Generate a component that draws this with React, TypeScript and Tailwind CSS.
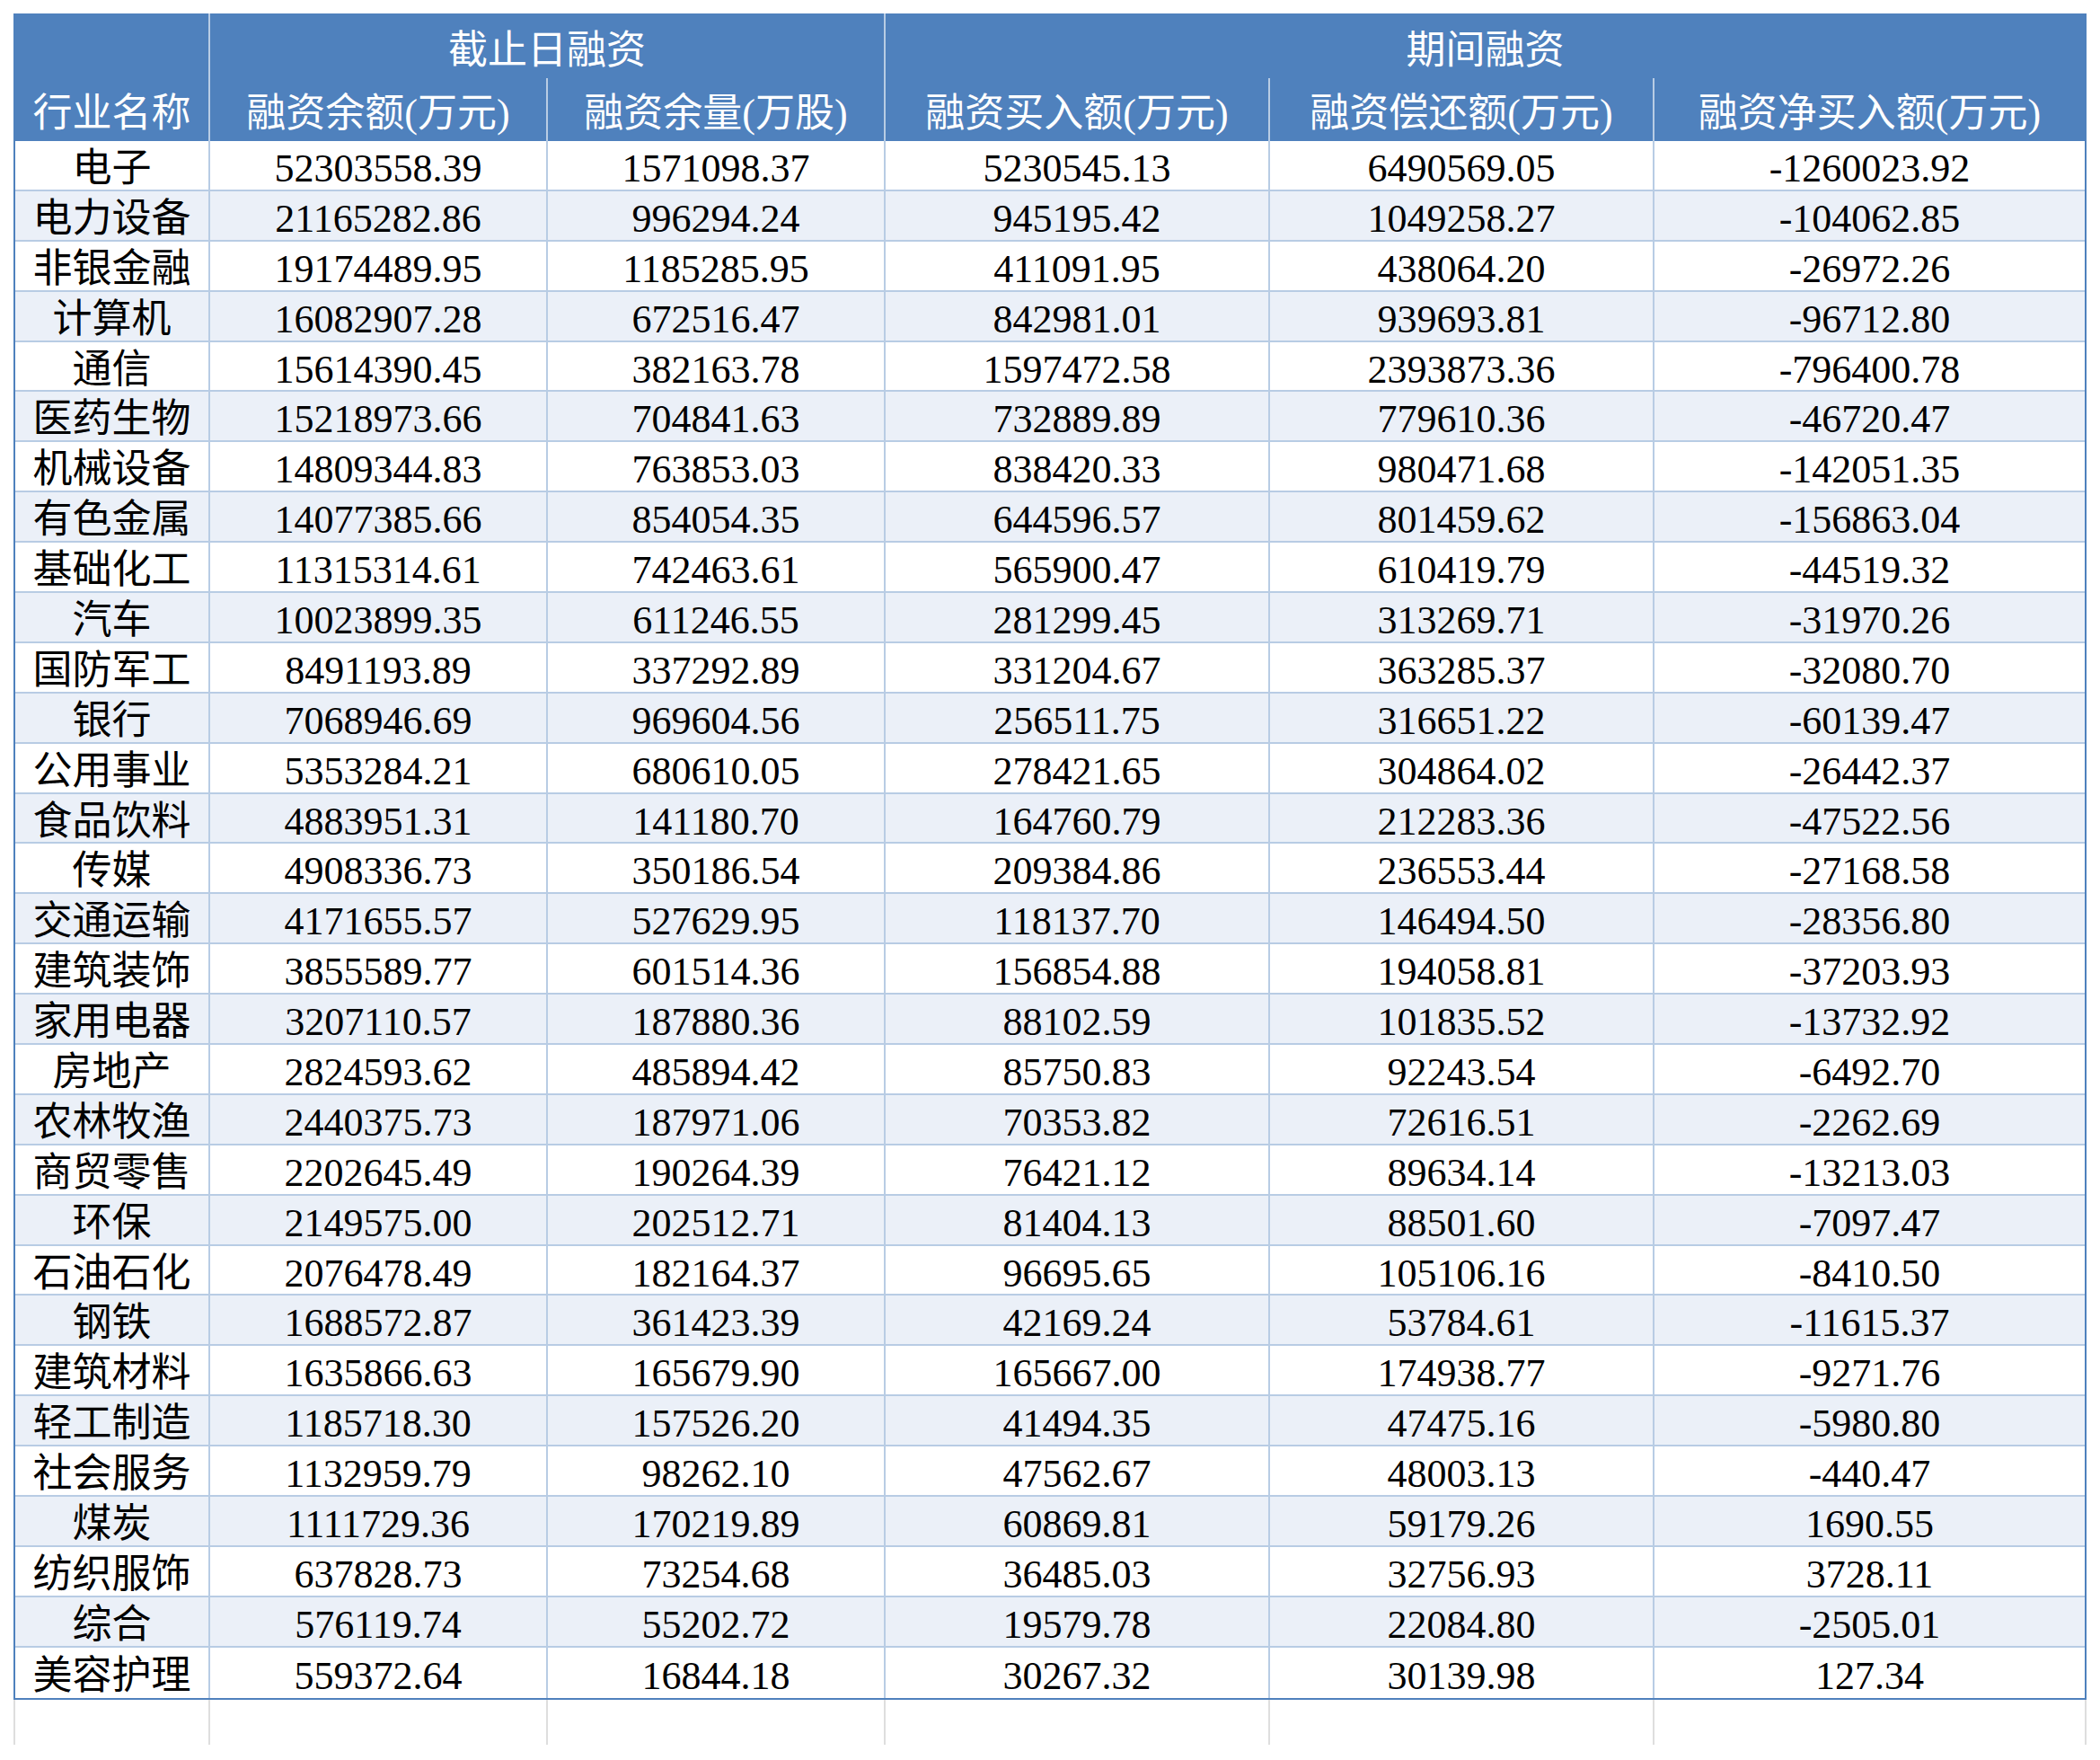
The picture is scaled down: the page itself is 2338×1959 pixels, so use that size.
import React from "react";

// 行业 / 融资余额 / 融资余量 / 融资买入额 / 融资偿还额 / 融资净买入额
type Row = [string, string, string, string, string, string];

const rows: Row[] = [
    ["电子", "52303558.39", "1571098.37", "5230545.13", "6490569.05", "-1260023.92"],
    ["电力设备", "21165282.86", "996294.24", "945195.42", "1049258.27", "-104062.85"],
    ["非银金融", "19174489.95", "1185285.95", "411091.95", "438064.20", "-26972.26"],
    ["计算机", "16082907.28", "672516.47", "842981.01", "939693.81", "-96712.80"],
    ["通信", "15614390.45", "382163.78", "1597472.58", "2393873.36", "-796400.78"],
    ["医药生物", "15218973.66", "704841.63", "732889.89", "779610.36", "-46720.47"],
    ["机械设备", "14809344.83", "763853.03", "838420.33", "980471.68", "-142051.35"],
    ["有色金属", "14077385.66", "854054.35", "644596.57", "801459.62", "-156863.04"],
    ["基础化工", "11315314.61", "742463.61", "565900.47", "610419.79", "-44519.32"],
    ["汽车", "10023899.35", "611246.55", "281299.45", "313269.71", "-31970.26"],
    ["国防军工", "8491193.89", "337292.89", "331204.67", "363285.37", "-32080.70"],
    ["银行", "7068946.69", "969604.56", "256511.75", "316651.22", "-60139.47"],
    ["公用事业", "5353284.21", "680610.05", "278421.65", "304864.02", "-26442.37"],
    ["食品饮料", "4883951.31", "141180.70", "164760.79", "212283.36", "-47522.56"],
    ["传媒", "4908336.73", "350186.54", "209384.86", "236553.44", "-27168.58"],
    ["交通运输", "4171655.57", "527629.95", "118137.70", "146494.50", "-28356.80"],
    ["建筑装饰", "3855589.77", "601514.36", "156854.88", "194058.81", "-37203.93"],
    ["家用电器", "3207110.57", "187880.36", "88102.59", "101835.52", "-13732.92"],
    ["房地产", "2824593.62", "485894.42", "85750.83", "92243.54", "-6492.70"],
    ["农林牧渔", "2440375.73", "187971.06", "70353.82", "72616.51", "-2262.69"],
    ["商贸零售", "2202645.49", "190264.39", "76421.12", "89634.14", "-13213.03"],
    ["环保", "2149575.00", "202512.71", "81404.13", "88501.60", "-7097.47"],
    ["石油石化", "2076478.49", "182164.37", "96695.65", "105106.16", "-8410.50"],
    ["钢铁", "1688572.87", "361423.39", "42169.24", "53784.61", "-11615.37"],
    ["建筑材料", "1635866.63", "165679.90", "165667.00", "174938.77", "-9271.76"],
    ["轻工制造", "1185718.30", "157526.20", "41494.35", "47475.16", "-5980.80"],
    ["社会服务", "1132959.79", "98262.10", "47562.67", "48003.13", "-440.47"],
    ["煤炭", "1111729.36", "170219.89", "60869.81", "59179.26", "1690.55"],
    ["纺织服饰", "637828.73", "73254.68", "36485.03", "32756.93", "3728.11"],
    ["综合", "576119.74", "55202.72", "19579.78", "22084.80", "-2505.01"],
    ["美容护理", "559372.64", "16844.18", "30267.32", "30139.98", "127.34"],
];

const subHeads = ["融资余额(万元)", "融资余量(万股)", "融资买入额(万元)", "融资偿还额(万元)", "融资净买入额(万元)"];

const cols = "grid grid-cols-[217px_376px_376px_428px_428px_479px]";

export default function App() {
    return (
        <main className="min-h-screen bg-white pl-[15px] pt-[15px] [font-family:'Liberation_Serif','Noto_Sans_CJK_SC',serif] text-[44px] leading-none">
            <div className="w-[2308px] border-x-2 border-b-2 border-[#4F81BD]">
                {/* header */}
                <div className={`${cols} grid-rows-[72px_70px] bg-[#4F81BD] text-white`}>
                    <div className="row-span-2 flex flex-col justify-end border-r-2 border-[#B8CCE4]">
                        <div className="flex h-[70px] items-center justify-center pt-[10px]">行业名称</div>
                    </div>
                    <div className="col-span-2 flex items-center justify-center border-r-2 border-[#B8CCE4] pt-[12px]">
                        截止日融资
                    </div>
                    <div className="col-span-3 flex items-center justify-center pt-[12px]">期间融资</div>
                    {subHeads.map((h, i) => (
                        <div
                            key={h}
                            className={
                                i < subHeads.length - 1
                                    ? "flex items-center justify-center border-r-2 border-[#B8CCE4] pt-[10px]"
                                    : "flex items-center justify-center pt-[10px]"
                            }
                        >
                            {h}
                        </div>
                    ))}
                </div>

                {/* body */}
                {rows.map((r, i) => (
                    <div
                        key={r[0]}
                        className={`${cols} h-[55.9px] text-black ${i % 2 === 1 ? "bg-[#EBF0F8]" : "bg-white"} ${
                            i < rows.length - 1 ? "border-b-2 border-[#B8CCE4]" : ""
                        }`}
                    >
                        {r.map((v, j) => (
                            <div
                                key={j}
                                className={
                                    j < r.length - 1
                                        ? "flex items-center justify-center border-r-2 border-[#B8CCE4] pt-[8px]"
                                        : "flex items-center justify-center pt-[8px]"
                                }
                            >
                                {v}
                            </div>
                        ))}
                    </div>
                ))}
            </div>

            {/* sheet gridlines below the table */}
            <div className={`${cols} h-[50px] w-[2308px] border-x-2 border-[#DEDEDE]`}>
                {[0, 1, 2, 3, 4, 5].map((k) => (
                    <div key={k} className={k < 5 ? "border-r-2 border-[#DEDEDE]" : ""} />
                ))}
            </div>
        </main>
    );
}
